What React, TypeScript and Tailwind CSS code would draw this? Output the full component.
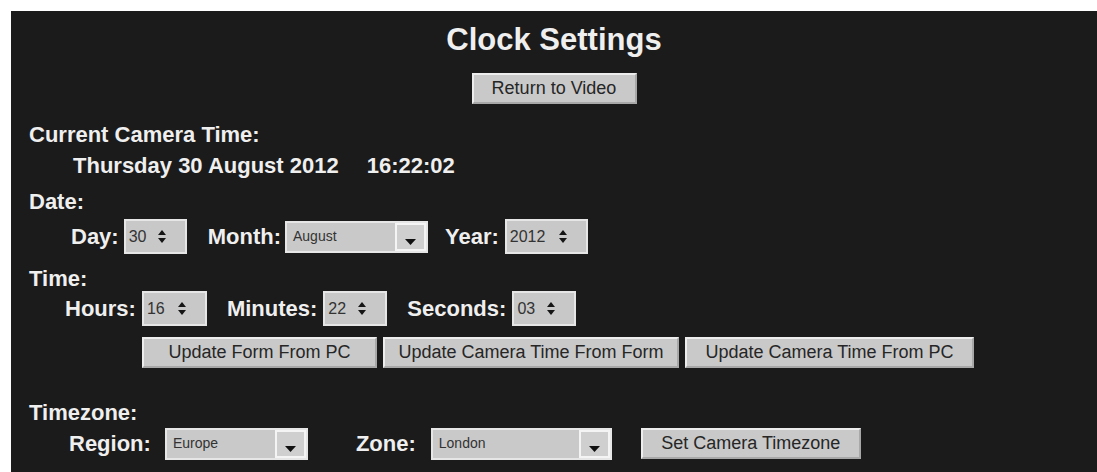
import type { ReactNode } from "react";

function Spinner() {
  return (
    <span className="flex flex-col items-center gap-[3px] text-[#151515]">
      <svg width="8" height="5" viewBox="0 0 8 5">
        <path d="M4 0 L8 5 L0 5 Z" fill="currentColor" />
      </svg>
      <svg width="8" height="5" viewBox="0 0 8 5">
        <path d="M0 0 L8 0 L4 5 Z" fill="currentColor" />
      </svg>
    </span>
  );
}

function NumberBox({ value, width }: { value: string; width: string }) {
  return (
    <span
      className={`flex h-[35px] items-center justify-between border-2 border-[#e6e6e6] bg-[#c8c8c8] pl-[3px] pr-[19px] text-[16px] font-normal text-[#333] ${width}`}
    >
      {value}
      <Spinner />
    </span>
  );
}

function Dropdown({ value, width }: { value: string; width: string }) {
  return (
    <span
      className={`flex h-[32px] items-stretch border-2 border-[#e6e6e6] bg-[#c9c9c9] font-normal ${width}`}
    >
      <span className="flex flex-1 items-center pl-[6px] text-[14px] text-[#333]">
        {value}
      </span>
      <span className="flex w-[31px] items-end justify-center border-2 border-[#f4f4f4] bg-[#cfcfcf] pb-[4px]">
        <svg width="11" height="6" viewBox="0 0 11 6">
          <path d="M0 0 L11 0 L5.5 6 Z" fill="#111" />
        </svg>
      </span>
    </span>
  );
}

function Button({ children, width }: { children: ReactNode; width: string }) {
  return (
    <button
      className={`flex h-[31px] items-center justify-center border-2 border-t-[#ededed] border-l-[#ededed] border-b-[#a8a8a8] border-r-[#a8a8a8] bg-[#c9c9c9] text-[18px] font-normal text-[#262626] ${width}`}
    >
      {children}
    </button>
  );
}

export default function App() {
  return (
    <div className="min-h-[472px] bg-white pt-[11px] pl-[11px] font-['Liberation_Sans',Arial,sans-serif]">
      <div className="h-[461px] bg-[#1b1b1b] font-bold text-[#efefef]">
        <h1 className="pt-[11px] text-center text-[31px] leading-[36px]">Clock Settings</h1>
        <div className="mt-[15px] flex justify-center">
          <Button width="w-[165px]">Return to Video</Button>
        </div>

        <div className="mt-[19px] pl-[18px] text-[22px] leading-[24px]">Current Camera Time:</div>
        <div className="mt-[7px] pl-[62px] text-[22px] leading-[24px]">
          Thursday 30 August 2012
          <span className="ml-[28px]">16:22:02</span>
        </div>

        <div className="mt-[12px] pl-[18px] text-[22px] leading-[24px]">Date:</div>
        <div className="mt-[5px] flex items-center pl-[60px] text-[22px]">
          <span>Day:</span>
          <span className="ml-[5px]">
            <NumberBox value="30" width="w-[63px]" />
          </span>
          <span className="ml-[21px]">Month:</span>
          <span className="ml-[4px]">
            <Dropdown value="August" width="w-[143px]" />
          </span>
          <span className="ml-[17px]">Year:</span>
          <span className="ml-[6px]">
            <NumberBox value="2012" width="w-[83px]" />
          </span>
        </div>

        <div className="mt-[13px] pl-[18px] text-[22px] leading-[24px]">Time:</div>
        <div className="flex items-center pl-[54px] text-[22px]">
          <span>Hours:</span>
          <span className="ml-[6px]">
            <NumberBox value="16" width="w-[65px]" />
          </span>
          <span className="ml-[20px]">Minutes:</span>
          <span className="ml-[6px]">
            <NumberBox value="22" width="w-[64px]" />
          </span>
          <span className="ml-[20px]">Seconds:</span>
          <span className="ml-[6px]">
            <NumberBox value="03" width="w-[64px]" />
          </span>
        </div>
        <div className="mt-[11px] flex gap-[6px] pl-[131px]">
          <Button width="w-[235px]">Update Form From PC</Button>
          <Button width="w-[296px]">Update Camera Time From Form</Button>
          <Button width="w-[289px]">Update Camera Time From PC</Button>
        </div>

        <div className="mt-[33px] pl-[18px] text-[22px] leading-[24px]">Timezone:</div>
        <div className="mt-[2px] flex items-center pl-[58px] text-[22px]">
          <span>Region:</span>
          <span className="ml-[14px]">
            <Dropdown value="Europe" width="w-[143px]" />
          </span>
          <span className="ml-[48px]">Zone:</span>
          <span className="ml-[15px]">
            <Dropdown value="London" width="w-[181px]" />
          </span>
          <span className="ml-[29px]">
            <Button width="w-[220px]">Set Camera Timezone</Button>
          </span>
        </div>
      </div>
    </div>
  );
}
